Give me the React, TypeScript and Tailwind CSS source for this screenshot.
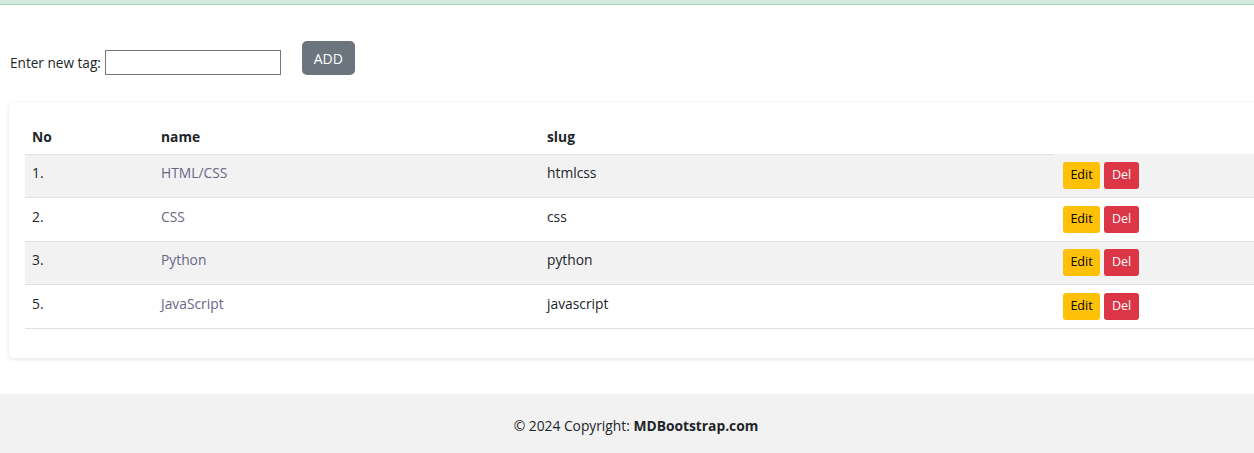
import React from "react";

const rows = [
  { no: "1.", name: "HTML/CSS", slug: "htmlcss" },
  { no: "2.", name: "CSS", slug: "css" },
  { no: "3.", name: "Python", slug: "python" },
  { no: "5.", name: "JavaScript", slug: "javascript" },
];

export default function App() {
  return (
    <div
      className="w-[1254px] h-[453px] overflow-hidden bg-white text-[#212529] text-[14px]"
      style={{ fontFamily: '"Open Sans", "Noto Sans", sans-serif' }}
    >
      <div className="h-[5px] bg-[#d3ebdf] border-b border-[#9fd6bf]" />
      <div className="flex items-end pl-[10px] pt-[36px]">
        <label className="text-[13.6px] leading-[16px] mb-[4px]">Enter new tag:</label>
        <input
          type="text"
          className="ml-[4px] w-[176px] h-[25px] border border-[#767676] bg-white outline-none"
        />
        <button className="ml-[21px] h-[34px] w-[53px] rounded-[5px] bg-[#6c757d] text-white text-[14px]">
          ADD
        </button>
      </div>
      <div className="mt-[28px] ml-[9px] w-[1300px] bg-white rounded-[4px] shadow-[0_1px_4px_rgba(0,0,0,0.12)] pt-[17px] pb-[29px] px-[16px]">
        <table className="w-[1280px] border-collapse text-[13.8px]">
          <thead>
            <tr className="h-[34px]">
              <th className="w-[129px] text-left pl-[7px] pt-[2px] font-bold border-b border-[#dee2e6]">No</th>
              <th className="w-[386px] text-left pl-[7px] pt-[2px] font-bold border-b border-[#dee2e6]">name</th>
              <th className="w-[514px] text-left pl-[7px] pt-[2px] font-bold border-b border-[#dee2e6]">slug</th>
              <th />
            </tr>
          </thead>
          <tbody>
            {rows.map((r, i) => (
              <tr
                key={r.no}
                className={`h-[43.5px] border-b border-[#dee2e6] ${i % 2 === 0 ? "bg-[#f2f2f2]" : "bg-white"}`}
              >
                <td className="pl-[7px] pb-[4px] align-middle">{r.no}</td>
                <td className="pl-[7px] pb-[4px] align-middle text-[#6a6585]">{r.name}</td>
                <td className="pl-[7px] pb-[4px] align-middle">{r.slug}</td>
                <td className="pl-[9px] align-middle">
                  <div className="flex gap-[4px]">
                    <button className="h-[27px] w-[37px] rounded-[3px] bg-[#ffc107] text-black text-[12.5px]">
                      Edit
                    </button>
                    <button className="h-[27px] w-[35px] rounded-[3px] bg-[#dc3545] text-white text-[12.5px]">
                      Del
                    </button>
                  </div>
                </td>
              </tr>
            ))}
          </tbody>
        </table>
      </div>
      <footer className="mt-[36px] h-[60px] bg-[#f2f2f2] flex items-center justify-center text-[13.8px] text-[#212529] pt-[5px] pl-[18px]">
        <span>
          © 2024 Copyright: <strong className="font-bold">MDBootstrap.com</strong>
        </span>
      </footer>
    </div>
  );
}
